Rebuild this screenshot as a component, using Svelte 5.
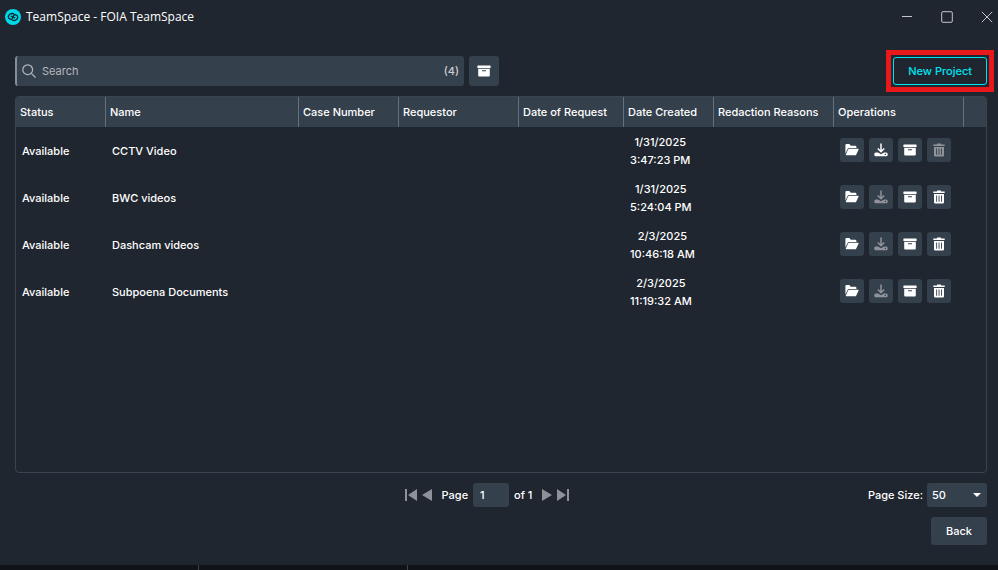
<script lang="ts">
    let projects = [
        { name: 'CCTV Video', date: '1/31/2025', time: '3:47:23 PM', downloadable: true, deletable: false },
        { name: 'BWC videos', date: '1/31/2025', time: '5:24:04 PM', downloadable: false, deletable: true },
        { name: 'Dashcam videos', date: '2/3/2025', time: '10:46:18 AM', downloadable: false, deletable: true },
        { name: 'Subpoena Documents', date: '2/3/2025', time: '11:19:32 AM', downloadable: false, deletable: true },
    ];
    let search = '';
    let page = '1';
    let pageSize = '50';

    $: visibleProjects = projects.filter((project) =>
        project.name.toLowerCase().includes(search.toLowerCase())
    );

    function removeProject(name: string) {
        projects = projects.filter((project) => project.name !== name);
    }
</script>

{#snippet archiveIcon()}
    <svg width="14" height="14" viewBox="0 0 14 14" fill="currentColor">
        <path d="M.8 1.500h12.400q.4 0 .4.4v2.200H.4V1.900q0-.4.4-.4z" />
        <path fill-rule="evenodd" d="M1.200 4.700h11.600v6.800q0 1-1 1H2.200q-1 0-1-1zM5 6.200v1h4v-1z" />
    </svg>
{/snippet}

<div class="window">
    <header class="title-bar">
        <svg width="16" height="16" viewBox="0 0 16 16">
            <circle cx="8" cy="8" r="8" fill="#00d9e8" />
            <g fill="none" stroke="#0c2a33" stroke-width="1.400" stroke-linecap="round">
                <path d="M8.600 4.600C5.500 4 3.200 5.700 3.300 8c.1 2.300 3.400 3 4.300 1.200.4-1-.3-2-1.300-1.800" />
                <path d="M7.400 11.400c3.100.6 5.400-1.100 5.300-3.400-.1-2.300-3.400-3-4.300-1.200-.4 1 .3 2 1.300 1.800" />
            </g>
        </svg>
        <span class="title">TeamSpace - FOIA TeamSpace</span>
        <div class="window-buttons">
            <button aria-label="Minimize">
                <svg width="12" height="12" viewBox="0 0 12 12"><path d="M1 5.500h10" /></svg>
            </button>
            <button aria-label="Maximize">
                <svg width="12" height="12" viewBox="0 0 12 12"><rect x=".7" y=".7" width="10.600" height="10.600" rx="1.200" /></svg>
            </button>
            <button aria-label="Close">
                <svg width="12" height="12" viewBox="0 0 12 12"><path d="M.8.8l10.400 10.400M11.200.8L.8 11.200" /></svg>
            </button>
        </div>
    </header>

    <main>
        <div class="toolbar">
            <label class="search">
                <svg width="14" height="14" viewBox="0 0 14 14" fill="none" stroke="#b3b8bf" stroke-width="1.200">
                    <circle cx="5.700" cy="5.700" r="4.900" />
                    <path d="M9.300 9.300l4.200 4.200" />
                </svg>
                <input type="text" placeholder="Search" aria-label="Search" bind:value={search} />
                <span>({visibleProjects.length})</span>
            </label>
            <button class="archive-button" aria-label="Show archived">{@render archiveIcon()}</button>
            <button class="new-project">New Project</button>
        </div>

        <div class="panel">
            <table>
                <colgroup>
                    <col class="w-status" />
                    <col class="w-name" />
                    <col class="w-case" />
                    <col class="w-requestor" />
                    <col class="w-request" />
                    <col class="w-created" />
                    <col class="w-reasons" />
                    <col class="w-operations" />
                    <col />
                </colgroup>
                <thead>
                    <tr>
                        <th>Status</th>
                        <th>Name</th>
                        <th>Case Number</th>
                        <th>Requestor</th>
                        <th>Date of Request</th>
                        <th>Date Created</th>
                        <th>Redaction Reasons</th>
                        <th>Operations</th>
                        <th></th>
                    </tr>
                </thead>
                <tbody>
                    {#each visibleProjects as project}
                        <tr>
                            <td>Available</td>
                            <td>{project.name}</td>
                            <td></td>
                            <td></td>
                            <td></td>
                            <td>
                                <div class="created">{project.date}<br />{project.time}</div>
                            </td>
                            <td></td>
                            <td>
                                <div class="operations">
                                    <button aria-label="Open">
                                        <svg width="14" height="14" viewBox="0 0 14 14" fill="currentColor">
                                            <path d="M.4 10.500V2.200q0-1.100 1.100-1.100h2.900l1.400 1.600h4.500q1.100 0 1.100 1.100v1.100H4.200q-1 0-1.500.9z" />
                                            <path d="M4.400 5.700h8.700q.9 0 .5.800l-2.300 4.900q-.4.900-1.300.9H1.300q-.9 0-.5-.8l2.300-4.900q.4-.9 1.300-.9z" />
                                        </svg>
                                    </button>
                                    <button aria-label="Download" disabled={!project.downloadable}>
                                        <svg width="14" height="14" viewBox="0 0 14 14">
                                            <path d="M7 .5v8M3.800 5.500L7 8.700l3.200-3.200" fill="none" stroke="currentColor" stroke-width="1.500" />
                                            <path fill="currentColor" fill-rule="evenodd" d="M1.800 9.500h2.200L7 11.300l3-1.800h2.200q1.500 0 1.500 1.500v.8q0 1.500-1.500 1.500H1.800q-1.500 0-1.500-1.500V11q0-1.500 1.500-1.500zM10.800 10.800v1.200H12v-1.200z" />
                                        </svg>
                                    </button>
                                    <button aria-label="Archive">{@render archiveIcon()}</button>
                                    <button
                                            aria-label="Delete"
                                            on:click={() => removeProject(project.name)}
                                            disabled={!project.deletable}>
                                        <svg width="14" height="14" viewBox="0 0 14 14" fill="currentColor">
                                            <path d="M1.300 1.500h3.400l.6-1h3.400l.6 1h3.400v1.600H1.300z" />
                                            <path fill-rule="evenodd" d="M2 4h10v8.300q0 1.200-1.200 1.200H3.200Q2 13.500 2 12.300zM4.200 5.500v6.300h.9V5.500zM6.600 5.500v6.300h.9V5.500zM9 5.500v6.300h.9V5.500z" />
                                        </svg>
                                    </button>
                                </div>
                            </td>
                            <td></td>
                        </tr>
                    {/each}
                </tbody>
            </table>
        </div>

        <div class="footer">
            <div class="pager">
                <button aria-label="First page">
                    <svg width="12" height="12" viewBox="0 0 12 12"><path d="M0 0h2v12H0zM12 0v12L3 6z" /></svg>
                </button>
                <button aria-label="Previous page">
                    <svg width="10" height="12" viewBox="0 0 10 12"><path d="M10 0v12L0 6z" /></svg>
                </button>
                <label for="page">Page</label>
                <input id="page" type="text" bind:value={page} />
                <span>of 1</span>
                <button aria-label="Next page">
                    <svg width="10" height="12" viewBox="0 0 10 12"><path d="M0 0v12l10-6z" /></svg>
                </button>
                <button aria-label="Last page">
                    <svg width="12" height="12" viewBox="0 0 12 12"><path d="M10 0h2v12h-2zM0 0v12l9-6z" /></svg>
                </button>
            </div>
            <div class="page-size">
                <label for="page-size">Page Size:</label>
                <div class="select">
                    <select id="page-size" bind:value={pageSize}>
                        <option>10</option>
                        <option>25</option>
                        <option>50</option>
                    </select>
                    <svg width="8" height="4" viewBox="0 0 8 4"><path d="M0 0h8L4 4z" fill="#fff" /></svg>
                </div>
            </div>
        </div>
        <button class="back">Back</button>
    </main>

    <div class="bottom-strip"><span></span><span></span></div>
</div>

<style>
    :global(body) {
        background: #20262f;
    }

    .window {
        display: flex;
        flex-direction: column;
        min-height: 100vh;
        color: #fff;
        font: 500 11px/18px Inter, sans-serif;
    }

    button, input, select {
        margin: 0;
        padding: 0;
        border: none;
        font: inherit;
        color: inherit;
    }

    button {
        display: flex;
        align-items: center;
        justify-content: center;
        background: #35404d;
        border-radius: 3px;
        cursor: pointer;
    }

    svg {
        display: block;
        flex: none;
    }

    .title-bar {
        display: flex;
        align-items: center;
        gap: 5px;
        height: 34px;
        padding-left: 5px;
    }

    .title {
        font: 12px/18px "Open Sans", sans-serif;
    }

    .window-buttons {
        display: flex;
        gap: 16px;
        margin-left: auto;
    }

    .window-buttons button {
        width: 24px;
        height: 24px;
        background: none;
    }

    .window-buttons button:last-child {
        margin-right: -1px;
    }

    .window-buttons svg {
        fill: none;
        stroke: #c3c7cc;
        stroke-width: 1;
    }

    main {
        flex: 1;
        display: flex;
        flex-direction: column;
        padding: 22px 11px 20px 15px;
    }

    .toolbar {
        display: flex;
        align-items: center;
        gap: 5px;
        margin-bottom: 10px;
    }

    .search {
        display: flex;
        align-items: center;
        gap: 6px;
        box-sizing: border-box;
        width: calc(46% + 2px);
        height: 30px;
        padding: 0 5px;
        border-left: 2px solid #858c96;
        border-radius: 3px;
        background: #35404d;
        color: #c9cdd2;
    }

    .search input {
        flex: 1;
        min-width: 0;
        background: none;
        outline: none;
        font-weight: 400;
    }

    .search input::placeholder {
        color: #b3b8bf;
        opacity: 1;
    }

    .archive-button {
        width: 30px;
        height: 30px;
    }

    .new-project {
        position: relative;
        height: 28px;
        margin-left: auto;
        padding: 0 14px;
        border: 1px solid #00e4f2;
        background: none;
        color: #00e4f2;
    }

    /* red frame round the call to action */
    .new-project::after {
        content: '';
        position: absolute;
        inset: -8px;
        border: 5px solid #e8181b;
    }

    .panel {
        flex: 1;
        border: 1px solid #3a4451;
        border-radius: 4px;
        overflow: hidden;
    }

    table {
        width: 100%;
        table-layout: fixed;
        border-collapse: collapse;
    }

    .w-status, .w-created {
        width: 90px;
    }

    .w-name {
        width: 193px;
    }

    .w-case {
        width: 100px;
    }

    .w-requestor, .w-reasons {
        width: 120px;
    }

    .w-request {
        width: 105px;
    }

    .w-operations {
        width: 130px;
    }

    thead {
        background: #35404d;
    }

    th {
        height: 30px;
        padding: 0 4px;
        text-align: left;
        font-weight: 500;
        white-space: nowrap;
        background: linear-gradient(#66707c, #66707c) right / 1px 100% no-repeat;
    }

    th:last-child {
        background: none;
    }

    td {
        height: 47px;
        padding: 0 6px;
        white-space: nowrap;
    }

    .created {
        width: max-content;
        text-align: center;
    }

    .operations {
        display: flex;
        gap: 5px;
        padding-bottom: 2px;
    }

    .operations button {
        width: 24px;
        height: 24px;
    }

    .operations button:disabled {
        color: #90949a;
        cursor: default;
    }

    .footer {
        display: grid;
        grid-template-columns: 1fr auto 1fr;
        align-items: center;
        margin: 10px 0;
    }

    .pager {
        grid-column: 2;
        display: flex;
        align-items: center;
        gap: 5px;
        padding-right: 28px;
    }

    .pager button {
        background: none;
        border-radius: 0;
    }

    .pager button svg {
        fill: #8d9299;
    }

    .pager label {
        padding-left: 5px;
    }

    .pager span {
        padding-right: 5px;
    }

    .pager input {
        box-sizing: border-box;
        width: 36px;
        height: 24px;
        padding: 0 7px;
        border-radius: 3px;
        background: #35404d;
    }

    .page-size {
        display: flex;
        align-items: center;
        justify-content: flex-end;
        gap: 4px;
    }

    .select {
        position: relative;
    }

    select {
        display: block;
        width: 60px;
        height: 24px;
        padding: 0 5px;
        border-radius: 3px;
        background: #35404d;
        appearance: none;
    }

    .select svg {
        position: absolute;
        top: 10px;
        right: 6px;
        pointer-events: none;
    }

    .back {
        align-self: flex-end;
        height: 28px;
        padding: 0 15px;
    }

    .bottom-strip {
        display: flex;
        height: 5px;
        background: #101419;
    }

    .bottom-strip span {
        width: 208px;
        border-right: 1px solid #3a4451;
    }

    .bottom-strip span:first-child {
        width: 198px;
    }
</style>
